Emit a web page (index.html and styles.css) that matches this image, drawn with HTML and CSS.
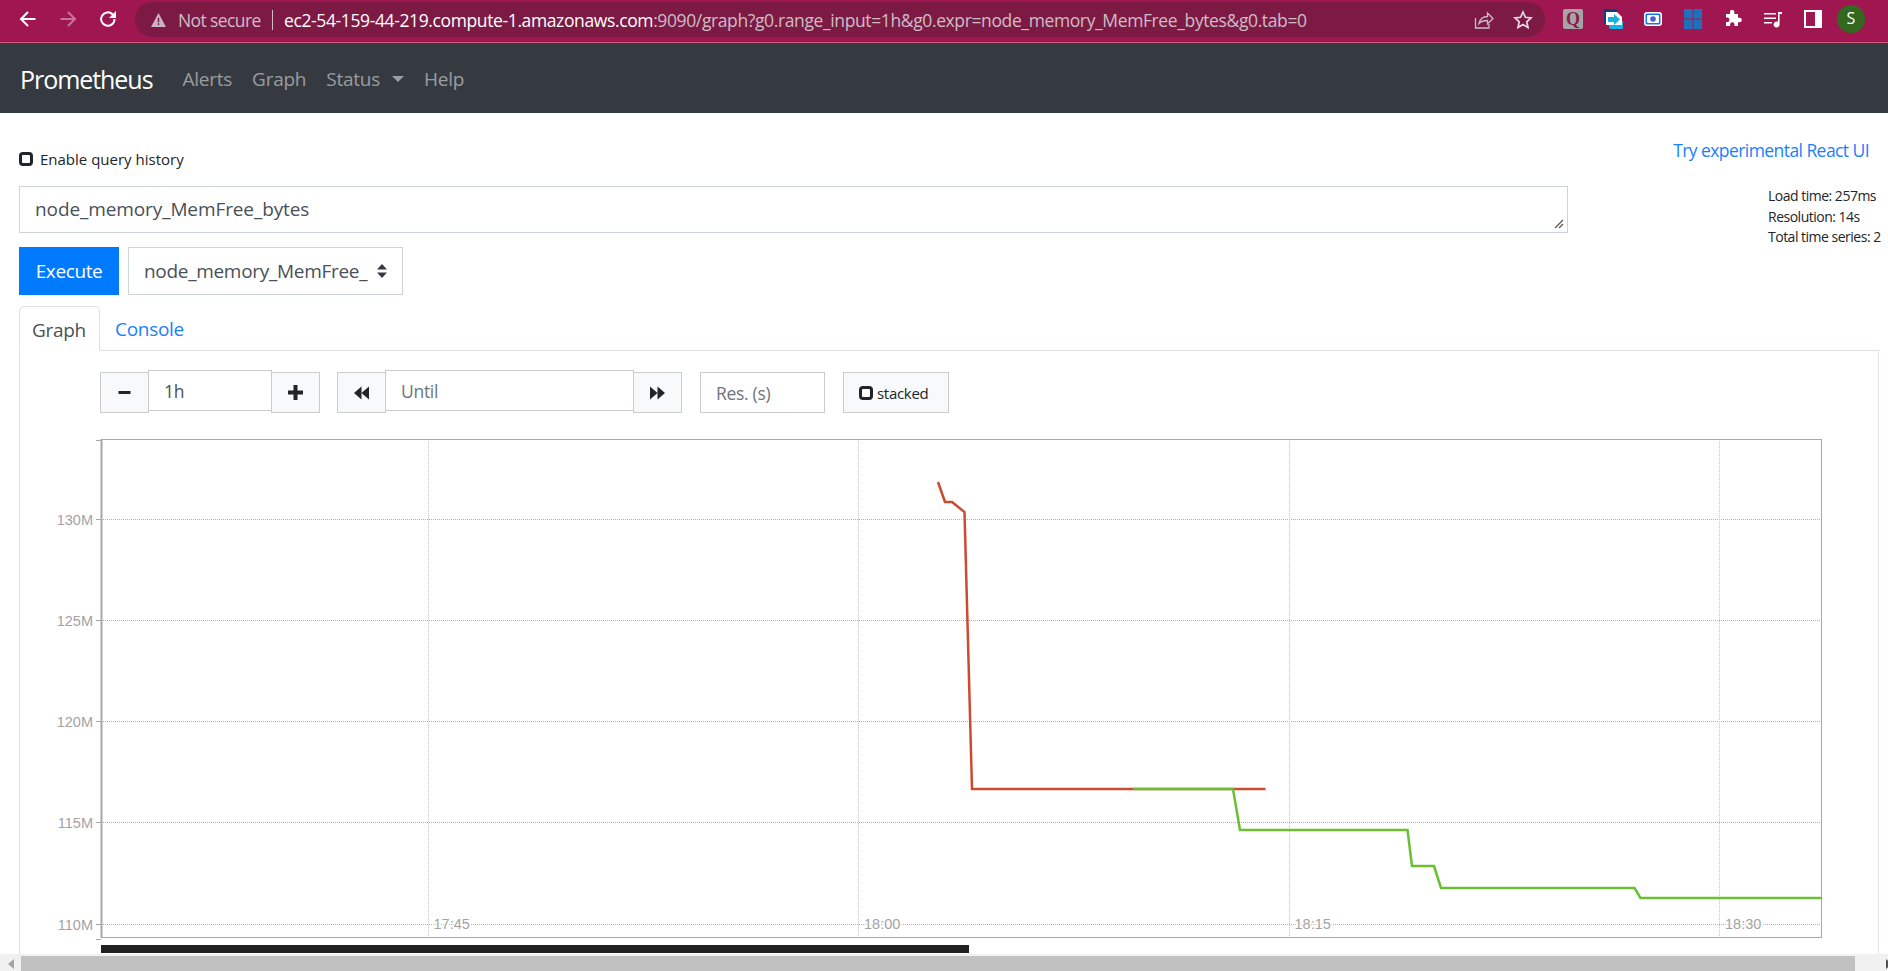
FILE: index.html
```html
<!DOCTYPE html>
<html lang="en">
<head>
<meta charset="utf-8">
<title>Prometheus Time Series Collection and Processing Server</title>
<link rel="stylesheet" href="styles.css">
</head>
<body>
<header class="chrome">
  <div class="nav-btns">
    <svg class="ico" viewBox="0 0 20 20"><path d="M17.500 10H4M10 3 3 10l7 7" fill="none" stroke="#fff" stroke-width="2"/></svg>
    <svg class="ico" viewBox="0 0 20 20"><path d="M2.500 10H16M10 3l7 7-7 7" fill="none" stroke="#c9729a" stroke-width="2"/></svg>
    <svg class="ico" viewBox="0 0 20 20"><path d="M16.500 10a6.700 6.700 0 1 1-2-4.700L17 7.800" fill="none" stroke="#fff" stroke-width="2"/><path d="M18 2v7h-7z" fill="#fff"/></svg>
  </div>
  <div class="omnibox">
    <svg class="warn" viewBox="0 0 16 15"><path d="M8 0 16 15H0z" fill="#c9b4c0"/><path d="M7.200 5h1.600v5H7.200zM7.200 11h1.600v1.800H7.200z" fill="#7d1a44"/></svg>
    <span class="not-secure">Not secure</span>
    <span class="omni-sep"></span>
    <span class="url"><b>ec2-54-159-44-219.compute-1.amazonaws.com</b>:9090/graph?g0.range_input=1h&amp;g0.expr=node_memory_MemFree_bytes&amp;g0.tab=0</span>
    <svg class="omni-ico" viewBox="0 0 20 20"><path d="M1.500 8v10h13.500v-4M5 13.500c1-4.500 4.500-7 8.500-7V3l5.500 5.500-5.500 5.500V10.500c-3.500 0-6.500.8-8.500 3z" fill="none" stroke="#cdbcc6" stroke-width="1.300"/></svg>
    <svg class="omni-ico star" viewBox="0 0 20 20"><path d="m10 2 2.400 5.300 5.600.6-4.200 3.900 1.200 5.700-5-2.900-5 2.900 1.200-5.700L2 7.900l5.600-.6z" fill="none" stroke="#e4dbe1" stroke-width="1.700"/></svg>
  </div>
  <div class="exts">
    <span class="ext-q">Q</span>
    <svg class="ico-ext" viewBox="0 0 20 20"><path d="M1 0h13v6H1z" fill="#123f7a"/><path d="M1 0h3v15H1z" fill="#123f7a"/><path d="M6 12h14v7a1 1 0 0 1-1 1H8a2 2 0 0 1-2-2z" fill="#17b5e0"/><path d="M3 3h11l5 5v8H3z" fill="#fff"/><path d="M5 8h6V5l6 5.500-6 5.500v-3H5z" fill="#15b3dc"/></svg>
    <svg class="ico-ext" viewBox="0 0 20 20"><rect x="1" y="3" width="18" height="14" rx="3" fill="#fff"/><rect x="2.500" y="4.500" width="15" height="11" rx="1.500" fill="#1b73e8"/><rect x="4" y="6" width="12" height="8" rx="1" fill="#fff"/><circle cx="10" cy="10" r="2.800" fill="#4b5bd6"/></svg>
    <svg class="ico-ext" viewBox="0 0 20 20"><path d="M1 0h8.500v9.500H1zM10.500 0H19v9.500h-8.500zM1 10.500h8.500V20H1zM10.500 10.500H19V20h-8.500z" fill="#1f70bb"/></svg>
    <svg class="ico-ext" viewBox="0 0 20 20"><path d="M7 2.500a2.200 2.200 0 0 1 4.300 0V5H15v3.700h1.500a2.300 2.300 0 0 1 0 4.600H15V17h-3.500v-1.500a2.200 2.200 0 0 0-4.400 0V17H3v-4h1.300a2.200 2.200 0 0 0 0-4.400H3V5h4z" fill="#fff"/></svg>
    <svg class="ico-ext" viewBox="0 0 20 20"><path d="M1 4h12v1.500H1zM1 8.500h12V10H1zM1 13h8v1.500H1z" fill="#fff"/><path d="M15 3h4v2h-2.400v10.500A3 3 0 1 1 15 12.800z" fill="#fff"/></svg>
    <svg class="ico-ext" viewBox="0 0 20 20"><path fill-rule="evenodd" d="M1 1h18v18H1zM3 3v14h9V3z" fill="#fff"/></svg>
    <span class="avatar">S</span>
  </div>
</header>
<nav class="navbar">
  <a class="brand">Prometheus</a>
  <a class="nav-link">Alerts</a>
  <a class="nav-link">Graph</a>
  <a class="nav-link status">Status<i class="caret"></i></a>
  <a class="nav-link">Help</a>
</nav>
<main class="page">
  <div class="top-row">
    <label class="history"><i class="check"></i>Enable query history</label>
    <a class="react">Try experimental React UI</a>
  </div>
  <div class="query-row">
    <div class="query-left">
      <div class="textarea">node_memory_MemFree_bytes
        <svg class="grip" viewBox="0 0 10 10"><path d="M1 9 9 1M5 9l4-4" stroke="#555" stroke-width="1.200" fill="none"/></svg>
      </div>
      <div class="exec-row">
        <button class="execute">Execute</button>
        <div class="select"><span class="select-val">node_memory_MemFree_</span><svg class="updown" viewBox="0 0 10 14"><path d="M5 0 10 5.500H0zM5 14 0 8.500h10z" fill="#343a40"/></svg></div>
      </div>
    </div>
    <div class="stats"><div>Load time: 257ms</div><div>Resolution: 14s</div><div>Total time series: 2</div></div>
  </div>
  <div class="tabs">
    <a class="tab active">Graph</a>
    <a class="tab">Console</a>
  </div>
  <section class="panel">
    <div class="controls">
      <div class="group">
        <button class="btn"><svg class="sign" viewBox="0 0 15 15"><path d="M1.500 6h12v3h-12z" fill="#212529"/></svg></button>
        <span class="input range">1h</span>
        <button class="btn"><svg class="sign" viewBox="0 0 15 15"><path d="M5.500 0h4v5.500H15v4H9.500V15h-4V9.500H0v-4h5.500z" fill="#212529"/></svg></button>
      </div>
      <div class="group">
        <button class="btn"><svg class="dbl" viewBox="0 0 14 12"><path d="M7 0v12L0 6zM14 0v12L7 6z" fill="#212529"/></svg></button>
        <span class="input until">Until</span>
        <button class="btn"><svg class="dbl" viewBox="0 0 14 12"><path d="M0 0v12l7-6zM7 0v12l7-6z" fill="#212529"/></svg></button>
      </div>
      <span class="input res">Res. (s)</span>
      <button class="btn stacked"><i class="check"></i>stacked</button>
    </div>
    <div class="chart">
      <svg class="plot" viewBox="0 0 1736 510" width="1736" height="510">
        <g class="grid">
          <path class="h" d="M16 86.500H1737M16 187.500H1737M16 288.500H1737M16 389.500H1737M16 491.500H1737"/>
          <path class="v" d="M343.500 6V504M773.500 6V504M1204.500 6V504M1634.500 6V504"/>
        </g>
        <g class="ticks">
          <path d="M11 7.500h5M11 86.500h5M11 187.500h5M11 288.500h5M11 389.500h5M11 491.500h5M11 506.500h5"/>
        </g>
        <rect class="frame" x="16.500" y="6.500" width="1720" height="498"/>
        <path class="axis" d="M16.500 6V505"/>
        <path class="red" d="M853 49 860 69H867L879.500 79 887 356H1180.500"/>
        <path class="green" d="M1048 356H1148L1155 397H1322.500L1327 433H1349L1356 455H1549.500L1555.500 465H1737"/>
        <g class="ylabels">
          <text x="8" y="92">130M</text><text x="8" y="193">125M</text><text x="8" y="294">120M</text><text x="8" y="395">115M</text><text x="8" y="497">110M</text>
        </g>
        <g class="xlabels">
          <text x="348.500" y="496">17:45</text><text x="779" y="496">18:00</text><text x="1209.500" y="496">18:15</text><text x="1640" y="496">18:30</text>
        </g>
      </svg>
      <div class="timeline"></div>
    </div>
  </section>
</main>
<div class="hscroll">
  <svg class="arrow" viewBox="0 0 6 10"><path d="M6 0v10L0 5z" fill="#a3a3a3"/></svg>
  <div class="thumb"></div>
  <svg class="arrow right" viewBox="0 0 6 10"><path d="M0 0v10l6-5z" fill="#505050"/></svg>
</div>
</body>
</html>
```
FILE: styles.css
```css
* { box-sizing: border-box; }
html, body { margin: 0; height: 971px; overflow: hidden; }
body { background: #fff; color: #212529; font-family: "Open Sans", "Noto Sans", sans-serif; position: relative; }
.chrome { height: 43px; background: #a01650; border-bottom: 1px solid #cf5a80; display: flex; align-items: center; padding-left: 18px; }
.nav-btns { display: flex; gap: 20px; width: 117px; margin-top: -4px; }
.ico { width: 20px; height: 20px; }
.omnibox { width: 1410px; height: 35px; margin-top: -3px; background: #7d1a44; border-radius: 18px; display: flex; align-items: center; padding-left: 16px; font-family: "Open Sans", sans-serif; font-size: 17.500px; color: #cfbcc7; white-space: nowrap; }
.warn { width: 15px; height: 14px; margin-right: 12px; flex: none; }
.not-secure { width: 83px; letter-spacing: -.6px; }
.omni-sep { width: 1px; height: 20px; background: #cfbcc7; margin: 0 11px; flex: none; }
.url { width: 1190px; overflow: hidden; letter-spacing: -.38px; }
.url b { color: #fff; font-weight: 400; }
.omni-ico { width: 20px; height: 20px; flex: none; }
.star { margin-left: 19px; }
.exts { display: flex; align-items: center; margin-left: 18px; gap: 20px; margin-top: -4px; }
.ico-ext { width: 20px; height: 20px; flex: none; }
.ext-q { width: 20px; height: 20px; background: #a5a5a5; border-radius: 2px; color: #8f1a4a; font: 700 18px/20px "Liberation Serif", serif; text-align: center; }
.avatar { width: 28px; height: 28px; margin-left: -6px; border-radius: 50%; background: #33691e; color: #fff; font-size: 16px; line-height: 27px; text-align: center; }
.navbar { height: 70px; background: #343a40; display: flex; align-items: center; padding: 2px 0 0 20px; }
.brand { font-size: 25px; color: #fff; margin-right: 30px; letter-spacing: -1.05px; }
.nav-link { font-size: 19px; color: rgba(255,255,255,.5); margin-right: 20px; letter-spacing: -.25px; }
.caret { display: inline-block; margin-left: 12px; vertical-align: 4px; border-top: 6px solid rgba(255,255,255,.5); border-left: 6px solid transparent; border-right: 6px solid transparent; }
.page { padding: 0 9px 0 19px; }
.top-row { height: 73px; display: flex; justify-content: space-between; position: relative; }
.history { display: flex; align-items: center; height: 20px; margin-top: 36px; font-size: 15px; }
.check { width: 14px; height: 14px; margin-right: 7px; border: 3px solid #212529; border-radius: 4px; background: #fff; flex: none; display: inline-block; }
.react { color: #1a7fff; font-size: 17.500px; margin: 25px 10px 0 0; letter-spacing: -.57px; height: 26px; }
.query-row { display: flex; justify-content: space-between; height: 121px; }
.query-left { width: 1549px; }
.textarea { width: 1549px; height: 47px; border: 1px solid #ced4da; padding: 0 15px; line-height: 45px; color: #495057; font-size: 19px; position: relative; letter-spacing: -.1px; }
.grip { position: absolute; right: 3px; bottom: 3px; width: 10px; height: 10px; }
.exec-row { display: flex; gap: 9px; margin-top: 14px; }
.execute { width: 100px; height: 48px; background: #007bff; border: 0; color: #fff; font: 19px "Open Sans", sans-serif; letter-spacing: -.4px; padding: 0; }
.select { width: 275px; height: 48px; border: 1px solid #ced4da; display: flex; align-items: center; padding: 0 15px; color: #495057; font-size: 19px; letter-spacing: -.3px; justify-content: space-between; }
.select-val { white-space: nowrap; }
.updown { width: 10px; height: 14px; flex: none; }
.stats { width: 115px; font-size: 14px; line-height: 20.700px; letter-spacing: -.5px; white-space: nowrap; position: relative; left: 4px; }
.tabs { display: flex; height: 45px; margin-top: -1px; position: relative; z-index: 1; }
.tab { height: 45px; padding: 0 15px; line-height: 47px; color: #1a7fff; font-size: 19px; letter-spacing: -.3px; }
.tab.active { width: 81px; color: #495057; border: 1px solid #dee2e6; border-bottom: 1px solid #fff; border-radius: 5px 5px 0 0; background: #fff; padding: 0 12px; line-height: 47px; }
.panel { width: 1860px; height: 620px; margin-top: -1px; border-left: 1px solid #dee2e6; border-right: 1px solid #dee2e6; border-top: 1px solid #dee2e6; padding-left: 80px; }
.controls { display: flex; gap: 18px; height: 82px; padding-top: 21px; align-items: flex-start; }
.group { display: flex; align-items: flex-start; margin-right: -1px; }
.btn { height: 41px; background: #f8f9fa; border: 1px solid #ccc; padding: 0; display: flex; align-items: center; justify-content: center; width: 49px; }
.sign { width: 15px; height: 15px; }
.dbl { width: 15px; height: 14px; }
.input { display: block; height: 41px; border: 1px solid #ccc; background: #fff; color: #6c757d; font-size: 17.500px; padding: 0 15px; letter-spacing: -.3px; }
.range { width: 124px; height: 41px; margin: -2px -1px 0; color: #495057; line-height: 41px; }
.until { width: 249px; height: 41px; margin: -2px -1px 0; line-height: 41px; }
.res { width: 125px; line-height: 41px; margin-left: 1px; }
.stacked { width: 106px; font: 15px "Open Sans", sans-serif; color: #212529; letter-spacing: -.3px; justify-content: flex-start; padding-left: 15px; }
.stacked .check { margin-right: 4px; }
.chart { margin-left: -15px; position: relative; height: 520px; }
.plot { display: block; overflow: visible; font-family: "Liberation Sans", sans-serif; font-size: 14.500px; }
.grid path { fill: none; stroke-width: 1; stroke-dasharray: 1 1; }
.grid .h { stroke: #b0b0b0; }
.grid .v { stroke: #c4c4c4; }
.ticks path { fill: none; stroke: #a8a8a8; stroke-width: 1; }
.frame { fill: none; stroke: #a8a8a8; stroke-width: 1; }
.axis { fill: none; stroke: #a8a8a8; stroke-width: 2; }
.red, .green { fill: none; stroke-width: 2.500px; stroke-linejoin: miter; }
.red { stroke: #cb4b32; }
.green { stroke: #6cbf33; }
.ylabels text { fill: #a3a3a3; text-anchor: end; }
.xlabels text { fill: #a3a3a3; paint-order: stroke; stroke: #fff; stroke-width: 3px; }
.timeline { width: 868px; height: 8px; margin-left: 16px; margin-top: 2px; background: #212121; }
.hscroll { position: absolute; left: 0; right: 0; bottom: 0; height: 17px; background: #f1f1f1; display: flex; align-items: center; justify-content: space-between; padding: 2px 0 0 8px; z-index: 2; }
.arrow { width: 6px; height: 10px; flex: none; }
.arrow.right { margin-right: -4px; }
.thumb { position: absolute; left: 21px; right: 33px; top: 2px; bottom: 0; background: #c1c1c1; }
```
